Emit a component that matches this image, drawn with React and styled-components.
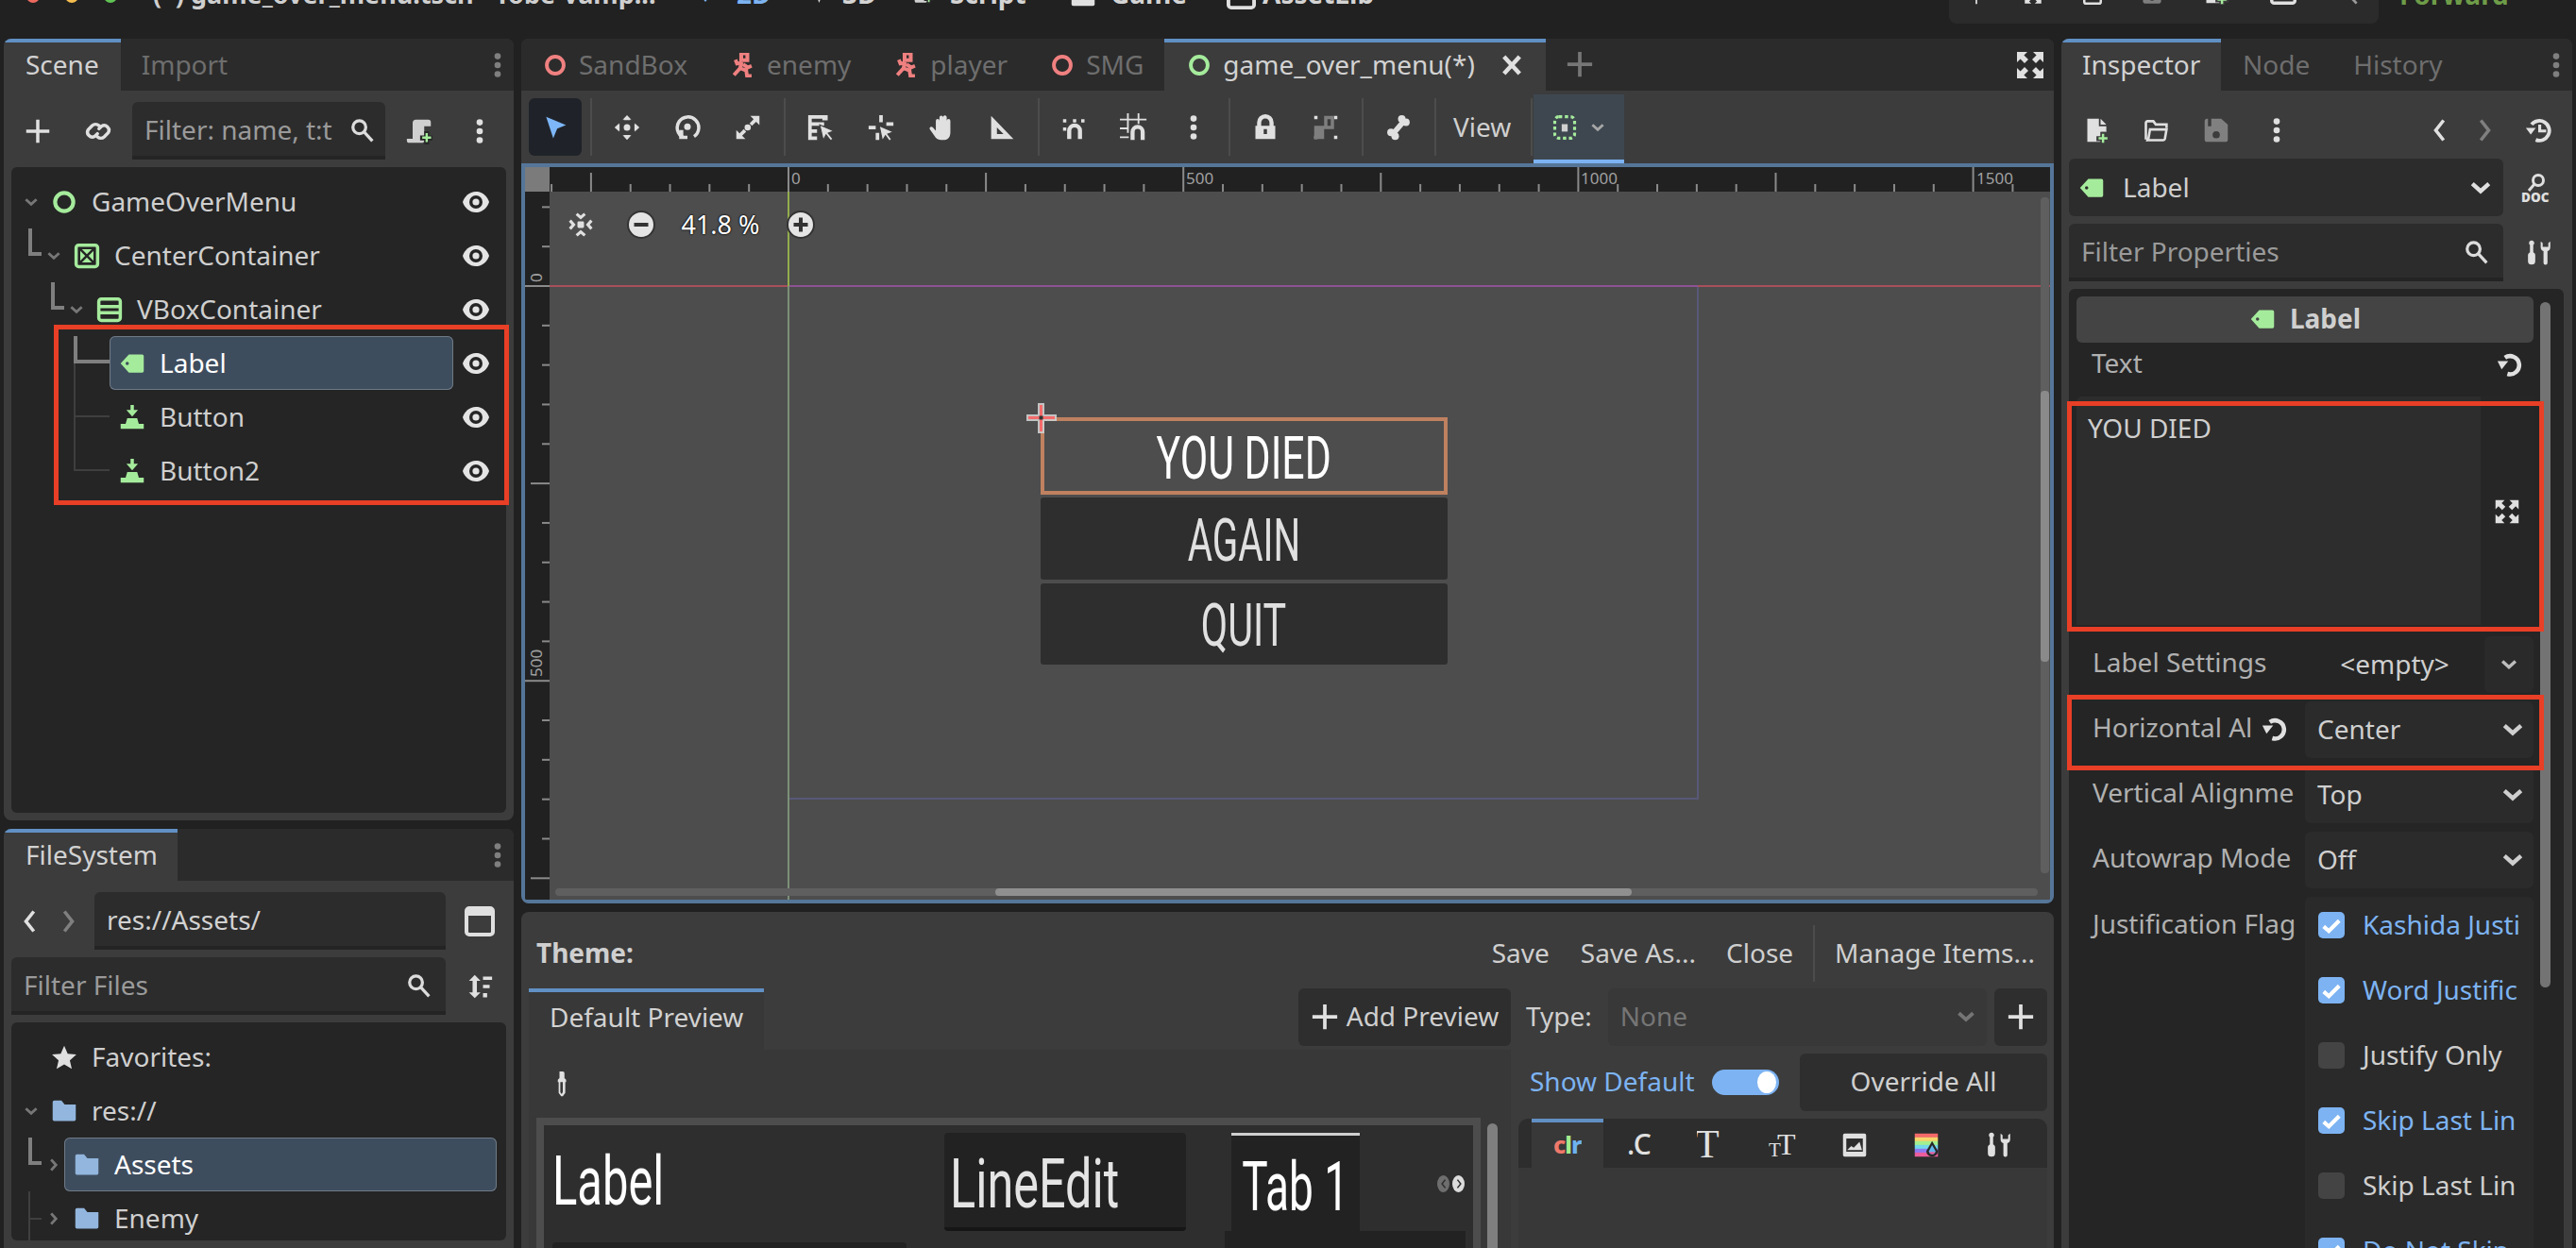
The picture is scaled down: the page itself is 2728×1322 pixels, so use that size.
import React from 'react';
import styled, { createGlobalStyle } from 'styled-components';

const Global = createGlobalStyle`
	html, body {
		margin: 0;
		padding: 0;
		background: #212121;
		overflow: hidden;
	}
	* {
		box-sizing: border-box;
	}
`;

const GREEN = '#a5eb9c';
const RED = '#f08080';
const BLUE = '#7db3f2';
const FOLDER = '#92b6dd';

// godot editor icons, 16 grid unless the icon says otherwise
const arrowCorner = 'M1 1h5.5L4.7 2.8 7 5 5 7 2.8 4.7 1 6.5z';
const icons = {
	plus: <path d="M7 1h2v6h6v2H9v6H7V9H1V7h6z" />,
	link: (
		<g fill="none" stroke="currentColor" strokeWidth="2" strokeLinecap="round">
			<path d="M7.5 9.5L6 11a2.9 2.9 0 0 1-4-4l2.4-2.4a2.9 2.9 0 0 1 4 0" />
			<path d="M8.5 6.5L10 5a2.9 2.9 0 0 1 4 4l-2.4 2.4a2.9 2.9 0 0 1-4 0" />
		</g>
	),
	search: (
		<g fill="none" stroke="currentColor" strokeWidth="2">
			<circle cx="6.5" cy="6" r="4.2" />
			<path d="M9.5 9l5.5 6" />
		</g>
	),
	kebab: (
		<g>
			<circle cx="8" cy="2.6" r="1.9" />
			<circle cx="8" cy="8" r="1.9" />
			<circle cx="8" cy="13.4" r="1.9" />
		</g>
	),
	scriptAdd: (
		<g>
			<path d="M4 12.5V3a2 2 0 0 1 2-2h7.5a1.5 1.5 0 0 1 1.5 1.5V5h-4v8.5A1.5 1.5 0 0 1 9.5 15H2a1.5 1.5 0 0 1-1.5-1.5v-1z" fill="#d0d0d0" />
			<path d="M11 8h3v2.500h2v3h-2V16h-3v-2.500H8.500v-3H11z" fill="#272727" />
			<path d="M11.800 9.200h1.400v2h2v1.400h-2v2h-1.400v-2h-2v-1.400h2z" fill={GREEN} />
		</g>
	),
	chevDown: <path d="M3 5.500l5 4.500 5-4.500" fill="none" stroke="currentColor" strokeWidth="2.500" />,
	chevRight: <path d="M5.500 3l4.500 5-4.500 5" fill="none" stroke="currentColor" strokeWidth="2.500" />,
	ring: <circle cx="8" cy="8" r="5.500" fill="none" stroke="currentColor" strokeWidth="2.400" />,
	centerBox: (
		<g fill="currentColor">
			<rect x="1.500" y="1.500" width="13" height="13" rx="1.500" fill="none" stroke="currentColor" strokeWidth="2" />
			<path d="M5 4h6L8 7zM5 12h6L8 9zM4 5v6l3-3zM12 5v6L9 8z" />
		</g>
	),
	vbox: (
		<g fill="none" stroke="currentColor" strokeWidth="2">
			<rect x="1.500" y="1.500" width="13" height="13" rx="1.500" />
			<path d="M2 6.200h12M2 9.800h12" />
		</g>
	),
	tag: <path fillRule="evenodd" d="M6 2.500h8a1 1 0 0 1 1 1v9a1 1 0 0 1-1 1H6L1 8zM5 7a1 1 0 1 0 0 2 1 1 0 0 0 0-2z" />,
	press: <path d="M7 .5h2v3h2.500L8 7.500 4.500 3.500H7zM5 8.500h6l1 3.500h3v3H1v-3h3z" />,
	folder: <path d="M1 2.500a1 1 0 0 1 1-1h4.300l2 2.500H15v9a1 1 0 0 1-1 1H2a1 1 0 0 1-1-1z" />,
	star: <path d="M8 1l2.100 4.800 5.300.5-4 3.500 1.200 5.200L8 12.300 3.400 15l1.200-5.200-4-3.500 5.300-.5z" />,
	back: <path d="M10.500 1L5 8l5.500 7" fill="none" stroke="currentColor" strokeWidth="2.400" />,
	forward: <path d="M5.500 1L11 8l-5.500 7" fill="none" stroke="currentColor" strokeWidth="2.400" />,
	diamond: <path d="M8 1l6 7-6 7-6-7z" />,
	solid: <rect x="1" y="1" width="14" height="14" rx="1" />,
	windowed: (
		<g>
			<rect x="1" y="1" width="14" height="14" rx="1.500" fill="none" stroke="currentColor" strokeWidth="2" />
			<rect x="1" y="1" width="14" height="4" />
		</g>
	),
	sort: (
		<g>
			<path d="M5 1l3.500 3.500H6.300v7H8.500L5 15l-3.500-3.500h2.200v-7H1.500z" />
			<path d="M10 2h5.500v2H10zM10 7h4v2h-4zM10 12h2.500v2.500H10z" />
		</g>
	),
	arrow: <path d="M2.500 1.500l12 5-5.300 2.200-2.400 5.800z" />,
	move: (
		<g>
			<circle cx="8" cy="8" r="2" />
			<path d="M8 .5l2.600 2.800H9.200L8 2.200 6.800 3.300H5.400zM8 15.500l2.600-2.800H9.200L8 13.800l-1.200-1.100H5.400zM.5 8l2.800-2.600v1.400L2.200 8l1.100 1.200v1.400zM15.500 8l-2.800-2.600v1.400L13.800 8l-1.100 1.200v1.400z" />
			<path d="M8 1l2 2.500H6zM8 15l2-2.500H6zM1 8l2.500-2v4zM15 8l-2.500-2v4z" />
		</g>
	),
	rotate: (
		<g>
			<path d="M5.500 14A6.500 6.500 0 1 1 12 13.500" fill="none" stroke="currentColor" strokeWidth="2" />
			<circle cx="8" cy="7.500" r="2" />
			<path d="M3 9.500v5.500h5v-2H5.500V9.500z" />
		</g>
	),
	scale: (
		<g>
			<path d="M9.500 1H15v5.500l-2-2-2.500 2.500L9 5.500 11.500 3zM1 9.500l2 2L5.500 9 7 10.500 4.500 13l2 2H1z" />
			<circle cx="7.900" cy="8" r="1.900" />
		</g>
	),
	listSelect: (
		<g>
			<path d="M1 1h11v3H9V3H3v2h7v2H3v2h3v2H3v2h3v2H1z" />
			<path d="M7.500 6.500l8 3.500-3.200 1.200 2.700 3.300-1.300 1-2.600-3.300-1.600 3z" stroke="#3d3d3d" strokeWidth=".6" />
		</g>
	),
	pivot: (
		<g>
			<path d="M7 1h2v4H7zM1 7h4v2H1zM11 5h4v2h-4zM5 11h2v4H5z" />
			<path d="M7 7l8 3.500-3.200 1.200 2.200 3-1.300 1-2.200-3-1.700 2.800z" stroke="#3d3d3d" strokeWidth=".6" />
		</g>
	),
	hand: <path d="M6.800 2a1.100 1.100 0 0 1 2.200 0v-.3a1.100 1.100 0 0 1 2.200.3v2a1.100 1.100 0 0 1 2.200 0V11c0 2.500-1.200 4.500-3.500 4.500H7.500c-1.800 0-2.800-.9-3.700-2.300L1 9.200c-.7-1.100.7-2.300 1.700-1.300L4.600 10V4a1.100 1.100 0 0 1 2.200 0z" />,
	ruler: <path fillRule="evenodd" d="M1.500 1L15 15H1.500zM5 8v4h4z" />,
	snap: (
		<g>
			<path d="M3.500 15V10a4.500 4.500 0 0 1 9 0v5H10v-5a2 2 0 0 0-4 0v5z" />
			<path d="M1 3h2v2H1zM1 8h2v2H1zM7 3h2v2H7zM12 3h2v2h-2z" />
		</g>
	),
	gridSnap: (
		<g>
			<path d="M4 0h1v11H4zM10 0h1v6h-1zM0 3h15v1H0zM0 8h5v1H0zM0 13h5v1H0z" />
			<path d="M6 15v-4.500a4 4 0 0 1 8 0V15h-2.300v-4.500a1.700 1.700 0 0 0-3.400 0V15z" />
		</g>
	),
	lock: <path fillRule="evenodd" d="M3 7V5a5 5 0 0 1 10 0v2h1v8H2V7zm2.500 0h5V5a2.500 2.500 0 0 0-5 0zM7 9v3h2V9z" />,
	group: (
		<g>
			<path d="M1 1h2v2H1zM13 1h2v2h-2zM1 13h2v2H1zM13 13h2v2h-2z" />
			<path d="M7 1h6v8H7v6H1V7h6zm2 2v4h2V3z" fill="#7e7e7e" />
		</g>
	),
	bone: (
		<g>
			<path d="M11 4.500L5 11.500" stroke="currentColor" strokeWidth="3.200" />
			<circle cx="10" cy="2.800" r="2.300" />
			<circle cx="12.500" cy="4.800" r="2.300" />
			<circle cx="3.500" cy="11" r="2.300" />
			<circle cx="6" cy="13.300" r="2.300" />
		</g>
	),
	dotted: (
		<g>
			<rect x="2" y="1.500" width="12" height="13" rx="2.500" fill="none" stroke={GREEN} strokeWidth="1.800" strokeDasharray="2 1.600" />
			<rect x="6.200" y="6" width="3.600" height="4.500" fill="#d0d0d0" />
		</g>
	),
	expand: (
		<g>
			<path d={arrowCorner} />
			<path d={arrowCorner} transform="matrix(-1 0 0 1 16 0)" />
			<path d={arrowCorner} transform="matrix(1 0 0 -1 0 16)" />
			<path d={arrowCorner} transform="matrix(-1 0 0 -1 16 16)" />
		</g>
	),
	center: (
		<g fill="none" stroke="currentColor" strokeWidth="1.800">
			<rect x="6" y="6" width="4" height="4" rx=".8" fill="currentColor" stroke="none" />
			<path d="M5.500 1.500L8 3.700l2.500-2.200M5.500 14.500L8 12.300l2.500 2.200M1.500 5.500L3.700 8l-2.200 2.500M14.500 5.500L12.300 8l2.200 2.500" />
		</g>
	),
	close: <path d="M2.500 2l11 12M13.500 2l-11 12" fill="none" stroke="currentColor" strokeWidth="3" />,
	runner: (
		<g>
			<path fillRule="evenodd" d="M5.500 0h6.500v6H5.500zM8 1.500v2h1.500v-2z" />
			<path d="M7 6L6 10 2 14.500M6 10l4 1.500 .5 3.500h3M8 7.500l3 2 2.500-1M7 6.500L4 7 3 4.500" fill="none" stroke="currentColor" strokeWidth="2.400" />
		</g>
	),
	fileAdd: (
		<g>
			<path d="M2 1h7v4.500h4.500V9H10v6H2zM10 1l3.500 3.500H10z" />
			<path d="M10 9h3v2.500h2.500v3H13V16h-3v-1.500H7.500v-3H10z" fill="#3d3d3d" />
			<path d="M10.800 10.200h1.400v2h2v1.400h-2v2h-1.400v-2h-2v-1.400h2z" fill={GREEN} />
		</g>
	),
	folderOpen: <path d="M2 13.500V3.500a1 1 0 0 1 1-1h3.500l1.500 2h6.500v2M2.200 14h10.300a1 1 0 0 0 1-.8l1-5.700H4.500l-1 5.700a1 1 0 0 1-1.300.8" fill="none" stroke="currentColor" strokeWidth="1.500" />,
	save: <path fillRule="evenodd" d="M1 2.500A1.500 1.500 0 0 1 2.500 1H3v4.500h2V1h6l4 3.500V13.500a1.500 1.500 0 0 1-1.500 1.500h-11A1.500 1.500 0 0 1 1 13.500zM8 8.500a2.200 2.200 0 1 0 0 4.400 2.200 2.200 0 0 0 0-4.400z" />,
	history: (
		<g>
			<path d="M4 4.500A6 6 0 1 1 6.500 13.800" fill="none" stroke="currentColor" strokeWidth="2.200" />
			<path d="M.5 6.500h6L3.500 10.500zM8 4.500h1.800v3h3v1.800H8z" />
		</g>
	),
	tools: (
		<g>
			<path d="M4 .5a1.500 1.500 0 0 1 1 2.700V7.500c1 .5 1.200 1 1.200 2v3.300a2.200 2.200 0 0 1-4.400 0V9.500c0-1 .3-1.500 1.200-2V3.200A1.500 1.500 0 0 1 4 .5z" />
			<path d="M9.500 1v3.500c0 1.300.8 2 1.700 2.300V14a1.200 1.200 0 0 0 2.400 0V6.800c.9-.3 1.700-1 1.700-2.300V1l-1.200 1V4.300h-3.400V2z" />
		</g>
	),
	reset: (
		<g>
			<path d="M5 4.500a5.500 5.500 0 1 1 1.500 9.800" fill="none" stroke="currentColor" strokeWidth="2.600" />
			<path d="M.5 6.500h6.500L3 11.500z" />
		</g>
	),
	dropper: <path fillRule="evenodd" d="M6 1h2a1 1 0 0 1 1 1v3l1 1v1.500H9.500v6.500L8 16h-1L5.500 14V7.500H5V6l1-1zM6.500 7.500v6L7 14.500h.5l.5-1v-6z" transform="translate(0 -.5)" />,
	picture: (
		<g>
			<path fillRule="evenodd" d="M2 1h12a1 1 0 0 1 1 1v12a1 1 0 0 1-1 1H2a1 1 0 0 1-1-1V2a1 1 0 0 1 1-1zm1 3v8h10V4z" />
			<path d="M3.500 11l2.500-2.500 1.500 1L11 6l1.500 5z" />
		</g>
	),
	rainbow: (
		<g>
			<rect x="1" y="1" width="14" height="2.400" fill="#f56a6a" />
			<rect x="1" y="3.300" width="14" height="2.400" fill="#f7d56a" />
			<rect x="1" y="5.600" width="14" height="2.400" fill="#a4f08f" />
			<rect x="1" y="7.900" width="14" height="2.400" fill="#72d8ea" />
			<rect x="1" y="10.200" width="14" height="2.400" fill="#8e78f0" />
			<rect x="1" y="12.500" width="14" height="2.500" fill="#ec5d9c" />
			<path d="M11.500 5.500L8 11.500a3.400 3.400 0 1 0 7 0z" fill="#272727" />
			<path d="M11.500 8L9.600 11.500a1.950 1.950 0 1 0 3.900 0z" fill="#61b7ee" />
			<path d="M9.700 12.200a1.950 1.950 0 0 0 3.700 0z" fill="#ec5d9c" />
		</g>
	),
};

const Svg = styled.svg`
	width: ${(p) => p.$w}px;
	height: ${(p) => p.$h}px;
	color: ${(p) => p.$c};
	fill: currentColor;
	flex: none;
	display: block;
`;

function Icon({ name, size = 28, height, color = '#e0e0e0' }) {
	return (
		<Svg viewBox="0 0 16 16" preserveAspectRatio="none" $w={size} $h={height || size} $c={color}>
			{icons[name]}
		</Svg>
	);
}

function Eye() {
	return (
		<Svg viewBox="0 0 28 24" $w={28} $h={24} $c="#e4e4e4">
			<path d="M14 1c7 0 12 5 14 11-2 6-7 11-14 11S2 18 0 12C2 6 7 1 14 1z" />
			<circle cx="14" cy="12" r="7" fill="#252525" />
			<circle cx="14" cy="12" r="3.600" />
		</Svg>
	);
}

function Badge({ sign }) {
	return (
		<Svg viewBox="0 0 30 30" $w={30} $h={32} $c="#e4e4e4">
			<circle cx="15" cy="15" r="14" stroke="#333" strokeWidth="2" />
			<path d={sign === '+' ? 'M13 7.500h4V13h5.500v4H17v5.500h-4V17H7.500v-4H13z' : 'M7.500 13h15v4h-15z'} fill="#333" />
		</Svg>
	);
}

function DocIcon() {
	return (
		<Svg viewBox="0 0 30 32" $w={30} $h={32} $c="#e0e0e0">
			<circle cx="18" cy="8" r="5.500" fill="none" stroke="currentColor" strokeWidth="3" />
			<path d="M14 12l-6 7" stroke="currentColor" strokeWidth="3" />
			<text x="0" y="31" fontFamily="Noto Sans, sans-serif" fontWeight="900" fontSize="13.500">DOC</text>
		</Svg>
	);
}

// the theme tabs that are letters, not shapes
function LetterIcon({ kind }) {
	if (kind === 'clr') {
		return (
			<Svg viewBox="0 0 30 28" $w={30} $h={28} $c="#e0e0e0">
				<text x="0" y="23" fontFamily="Noto Sans, sans-serif" fontWeight="800" fontSize="25" letterSpacing="-1">
					<tspan fill="#f0786a">c</tspan>
					<tspan fill="#a4ed8e">l</tspan>
					<tspan fill="#6eb2ef">r</tspan>
				</text>
			</Svg>
		);
	}
	if (kind === 'dotC') {
		return (
			<Svg viewBox="0 0 30 28" $w={30} $h={28} $c="#e0e0e0">
				<text x="2" y="24" fontFamily="Noto Sans, sans-serif" fontWeight="500" fontSize="30">.C</text>
			</Svg>
		);
	}
	if (kind === 'bigT') {
		return (
			<Svg viewBox="0 0 30 30" $w={30} $h={30} $c="#e0e0e0">
				<text x="-2" y="28" fontFamily="Liberation Serif, serif" fontSize="42">T</text>
			</Svg>
		);
	}
	return (
		<Svg viewBox="0 0 30 28" $w={30} $h={28} $c="#e0e0e0">
			<text x="0" y="26" fontFamily="Liberation Serif, serif" fontSize="21">T</text>
			<text x="9" y="24" fontFamily="Liberation Serif, serif" fontSize="32">T</text>
		</Svg>
	);
}

const Page = styled.div`
	width: 2728px;
	height: 1322px;
	overflow: hidden;
	background: #212121;
	color: #cfcfcf;
	font-family: 'Noto Sans', sans-serif;
	font-size: 28px;
	line-height: 1.2;
	position: relative;
	display: flex;
	flex-direction: column;
`;

const TopBar = styled.div`
	height: 41px;
	flex: none;
	display: flex;
	overflow: hidden;
	align-items: flex-start;
	padding-left: 28px;
`;

const Lights = styled.div`
	display: flex;
	gap: 27px;
	margin-top: -11px;
	margin-right: 38px;
`;

const Light = styled.div`
	width: 14px;
	height: 14px;
	border-radius: 50%;
	background: ${(p) => p.$c};
`;

const MenuRow = styled.div`
	display: flex;
	align-items: center;
	height: 40px;
	margin-top: -26px;
	font-weight: 700;
	color: #d4d4d4;
	white-space: nowrap;
`;

const WindowTitle = styled.div`
	width: 576px;
	font-size: 27px;
	overflow: hidden;
	font-weight: 700;
	color: #cfcfcf;
`;

const MenuItem = styled.div`
	width: ${(p) => p.$w}px;
	flex: none;
	display: flex;
	align-items: center;
	gap: ${(p) => p.$gap}px;
	color: ${(p) => p.$c || 'inherit'};
`;

const RunBox = styled.div`
	margin-left: auto;
	width: 455px;
	height: 25px;
	background: #2b2b2b;
	border-radius: 0 0 8px 8px;
	padding: 0 22px 20px;
	overflow: hidden;
	display: flex;
	justify-content: space-between;
	align-items: flex-end;
`;

const Renderer = styled.div`
	color: #6e9c48;
	font-weight: 700;
	width: 209px;
	padding-left: 22px;
	margin-top: -22px;
`;

const Columns = styled.div`
	flex: 1;
	min-height: 0;
	display: flex;
	gap: 8px;
	padding-left: 4px;
`;

const Column = styled.div`
	width: ${(p) => p.$w}px;
	flex: none;
	display: flex;
	flex-direction: column;
	gap: 9px;
`;

const Panel = styled.div`
	background: #3c3c3c;
	border-radius: 8px 8px 0 0;
	overflow: hidden;
	flex: ${(p) => (p.$h ? 'none' : '1')};
	height: ${(p) => (p.$h ? `${p.$h}px` : 'auto')};
	display: flex;
	flex-direction: column;
	min-height: 0;
	${(p) => p.$h && 'border-radius: 8px;'}
`;

const TabBar = styled.div`
	height: 55px;
	flex: none;
	background: #2b2b2b;
	display: flex;
	align-items: stretch;
`;

const Tab = styled.div`
	display: flex;
	align-items: center;
	gap: ${(p) => p.$gap || 12}px;
	padding: 0 ${(p) => p.$pad || 23}px 4px;
	color: ${(p) => (p.$active ? '#d2d2d2' : '#6e6e6e')};
	background: ${(p) => (p.$active ? '#3c3c3c' : 'transparent')};
	border-top: 4px solid ${(p) => (p.$active ? '#6190c4' : 'transparent')};
	width: ${(p) => (p.$w ? `${p.$w}px` : 'auto')};
	white-space: nowrap;
`;

const TabEnd = styled.div`
	margin-left: auto;
	display: flex;
	align-items: center;
	padding-right: ${(p) => p.$pad || 0}px;
`;

const NewTab = styled.div`
	display: flex;
	align-items: center;
	padding: 0 0 2px 21px;
`;

const SideBar = styled.div`
	display: flex;
	align-items: center;
	flex: none;
	height: ${(p) => p.$h || 61}px;
	margin-top: ${(p) => p.$top || 0}px;
	padding: 0 0 0 ${(p) => p.$left || 0}px;
`;

const Gap = styled.div`
	width: ${(p) => p.$w}px;
	flex: none;
`;

const LineEdit = styled.div`
	width: ${(p) => p.$w}px;
	height: 61px;
	flex: none;
	background: #2c2c2c;
	border-bottom: 4px solid #242424;
	border-radius: 6px 6px 0 0;
	display: flex;
	align-items: center;
	justify-content: space-between;
	padding: 3px ${(p) => p.$right || 16}px 0 13px;
	color: ${(p) => p.$c || '#9a9a9a'};
`;

const TreeBox = styled.div`
	margin: 8px 8px 8px;
	background: #252525;
	border-radius: 6px;
	flex: 1;
	min-height: 0;
	padding-top: 8px;
	overflow: hidden;
	position: relative;
`;

const TreeRow = styled.div`
	height: 57px;
	display: flex;
	align-items: center;
	padding: 0 ${(p) => p.$right || 18}px 0 12px;
`;

const Indent = styled.div`
	width: ${(p) => p.$depth * 24}px;
	flex: none;
	align-self: stretch;
	display: flex;
	justify-content: flex-end;
`;

const Elbow = styled.div`
	width: 14px;
	height: 29px;
	margin-right: 4px;
	border-left: 4px solid #7f7f7f;
	border-bottom: 4px solid #7f7f7f;
`;

const ThinTee = styled.div`
	width: 14px;
	height: 100%;
	margin-right: 4px;
	border-left: 2px solid #3f3f3f;
	background: linear-gradient(#3f3f3f, #3f3f3f) no-repeat 0 50% / 100% 2px;
`;

const ChevSlot = styled.div`
	width: 30px;
	flex: none;
	display: flex;
`;

const LeafGuide = styled.div`
	width: 92px;
	flex: none;
	align-self: stretch;
	padding-left: 54px;
	display: flex;
	flex-direction: column;
`;

const BranchTop = styled.div`
	height: 29px;
	flex: none;
	border-left: ${(p) => (p.$strong ? '4px solid #7f7f7f' : '2px solid #3f3f3f')};
	border-bottom: ${(p) => (p.$strong ? '4px solid #7f7f7f' : '2px solid #3f3f3f')};
`;

const BranchRest = styled.div`
	flex: 1;
	border-left: 2px solid ${(p) => (p.$none ? 'transparent' : '#3f3f3f')};
`;

const NameBox = styled.div`
	flex: 1;
	min-width: 0;
	height: 100%;
	display: flex;
	align-items: center;
	gap: ${(p) => p.$gap || 15}px;
	border-radius: 6px;
	padding-left: ${(p) => p.$pad || 0}px;
	margin-left: ${(p) => (p.$pull ? '-10px' : '0')};
	margin-right: ${(p) => p.$after || 10}px;
	color: ${(p) => (p.$on ? '#ffffff' : '#cfcfcf')};
	background: ${(p) => (p.$on ? '#3e4d5e' : 'transparent')};
	box-shadow: ${(p) => (p.$on ? 'inset 0 0 0 1px #6f7a86' : 'none')};
`;

const Mark = styled.div`
	position: absolute;
	left: ${(p) => p.$x}px;
	top: ${(p) => p.$y}px;
	width: ${(p) => p.$w}px;
	height: ${(p) => p.$h}px;
	border: 5px solid #e83f26;
	pointer-events: none;
`;

const ToolBar = styled.div`
	height: 77px;
	flex: none;
	display: flex;
	align-items: flex-start;
	padding: 8px 0 0 8px;
`;

const ToolBtn = styled.div`
	width: ${(p) => p.$w || 64}px;
	height: 61px;
	flex: none;
	display: flex;
	align-items: center;
	justify-content: center;
	border-radius: 6px;
	background: ${(p) => (p.$on ? '#1f2329' : 'transparent')};
	margin-right: ${(p) => p.$mr || 0}px;
`;

const ToolSep = styled.div`
	width: 2px;
	height: 61px;
	flex: none;
	margin: 0 5px 0 6px;
	background: #4c4c4c;
`;

const ViewBtn = styled.div`
	height: 61px;
	display: flex;
	align-items: center;
	padding: 0 15px 0 13px;
`;

const ModeBtn = styled.div`
	width: 96px;
	height: 73px;
	margin: -4px 0 0 -4px;
	background: #3e4750;
	border-bottom: 4px solid ${BLUE};
	display: flex;
	align-items: center;
	justify-content: center;
	gap: 12px;
`;

const Frame = styled.div`
	height: 784px;
	flex: none;
	border: 4px solid #557699;
	border-radius: 0 0 6px 6px;
	display: grid;
	grid-template-columns: 26px 1fr;
	grid-template-rows: 26px 1fr;
	overflow: hidden;
`;

const RulerCorner = styled.div`
	background: #7b7b7b;
`;

const RulerSvg = styled.svg`
	display: block;
	background: #212121;
	width: 100%;
	height: 100%;
	font-family: 'Noto Sans', sans-serif;
	font-size: 17px;
	fill: #a0a0a0;
`;

const Canvas = styled.div`
	position: relative;
	background: #4d4d4d;
	overflow: hidden;
`;

const GuideSvg = styled.svg`
	position: absolute;
	left: 0;
	top: 0;
	width: 100%;
	height: 100%;
`;

const ZoomBar = styled.div`
	position: absolute;
	left: 19px;
	top: 19px;
	display: flex;
	align-items: center;
	color: #fff;
	text-shadow: 0 0 2px #000, 0 0 2px #000;
	font-size: 27px;
`;

const ZoomValue = styled.div`
	width: 139px;
	text-align: center;
	padding-right: 1px;
`;

const ScenePreview = styled.div`
	position: absolute;
	left: 520px;
	top: 239px;
	width: 431px;
	display: flex;
	flex-direction: column;
	gap: 3px;
	font-family: Roboto, sans-serif;
	font-weight: 450;
	font-size: 63px;
`;

const Condensed = styled.span`
	display: inline-block;
	transform: scaleX(${(p) => p.$k || 0.67});
	transform-origin: ${(p) => p.$origin || 'center'};
	white-space: nowrap;
	line-height: 1;
`;

const GameLabel = styled.div`
	height: 82px;
	border: 4px solid #bf8160;
	color: #fff;
	display: flex;
	align-items: center;
	justify-content: center;
	padding-top: 4px;
`;

const GameButton = styled.div`
	height: ${(p) => p.$h}px;
	margin-top: ${(p) => p.$mt || 0}px;
	background: #2e2e2e;
	border-radius: 3px;
	color: #e0e0e0;
	display: flex;
	align-items: center;
	justify-content: center;
	padding-top: 3px;
`;

const Handle = styled.svg`
	position: absolute;
	left: 504px;
	top: 223px;
	width: 34px;
	height: 34px;
`;

const VScroll = styled.div`
	position: absolute;
	left: 1579px;
	top: 6px;
	width: 9px;
	height: 716px;
	background: #5f5f5f;
	border-radius: 4px;
`;

const VThumb = styled.div`
	margin-top: 205px;
	height: 287px;
	background: #8a8a8a;
	border-radius: 4px;
`;

const HScroll = styled.div`
	position: absolute;
	left: 6px;
	top: 738px;
	width: 1570px;
	height: 8px;
	background: #5f5f5f;
	border-radius: 4px;
	padding-left: 466px;
`;

const HThumb = styled.div`
	width: 674px;
	height: 8px;
	background: #8f8f8f;
	border-radius: 4px;
`;

const Bottom = styled(Panel)`
	border-radius: 8px 8px 0 0;
	padding: 0 7px 0 8px;
`;

const ThemeHead = styled.div`
	height: 81px;
	flex: none;
	display: flex;
	align-items: center;
	padding: 6px 12px 0 8px;
`;

const ThemeTitle = styled.div`
	font-weight: 700;
	margin-right: auto;
`;

const ThemeAct = styled.div`
	margin-right: ${(p) => p.$mr}px;
`;

const HeadSep = styled.div`
	width: 2px;
	height: 60px;
	background: #4c4c4c;
	margin-right: 21px;
`;

const ThemeBody = styled.div`
	flex: 1;
	min-height: 0;
	display: flex;
	gap: 8px;
`;

const PreviewCol = styled.div`
	width: 1040px;
	flex: none;
	display: flex;
	flex-direction: column;
`;

const PreviewTabs = styled.div`
	height: 65px;
	flex: none;
	display: flex;
	align-items: flex-start;
	justify-content: space-between;
`;

const PreviewTab = styled.div`
	width: 249px;
	height: 65px;
	background: #383838;
	border-top: 4px solid #6190c4;
	display: flex;
	align-items: center;
	padding: 0 0 8px 22px;
	color: #d2d2d2;
`;

const DarkBtn = styled.div`
	width: ${(p) => p.$w}px;
	height: 61px;
	flex: none;
	background: #2e2e2e;
	border-radius: 6px;
	display: flex;
	align-items: center;
	justify-content: center;
	gap: ${(p) => p.$gap || 8}px;
	padding-bottom: 2px;
`;

const PreviewBody = styled.div`
	flex: 1;
	min-height: 0;
	background: #383838;
	padding-left: 8px;
`;

const DropperRow = styled.div`
	height: 72px;
	display: flex;
	align-items: center;
	padding-left: 14px;
`;

const PreviewWrap = styled.div`
	display: flex;
	height: 200px;
`;

const PreviewFrame = styled.div`
	width: 1000px;
	background: #4d4d4d;
	padding: 8px 8px 0;
`;

const PreviewInner = styled.div`
	height: 100%;
	background: #2e2e2e;
	padding: 8px 8px 0 9px;
	display: flex;
	color: #fff;
	font-family: Roboto, sans-serif;
	font-weight: 450;
	font-size: 73px;
`;

const PreviewScroll = styled.div`
	width: 11px;
	margin: 6px 0 0 7px;
	background: #7f7f7f;
	border-radius: 6px;
`;

const LabelCol = styled.div`
	width: 375px;
	flex: none;
`;

const PreviewLabel = styled.div`
	height: 116px;
	display: flex;
	align-items: center;
	padding-bottom: 14px;
`;

const PreviewDark = styled.div`
	height: 100px;
	background: #222;
	border-radius: 4px 4px 0 0;
`;

const EditBox = styled.div`
	width: 256px;
	height: 104px;
	margin-left: 40px;
	flex: none;
	background: #222;
	border-bottom: 4px solid #161616;
	border-radius: 4px;
	color: #e4e4e4;
	display: flex;
	align-items: center;
	padding-left: 6px;
	padding-top: 8px;
`;

const TabsCol = styled.div`
	width: 255px;
	flex: none;
	margin-left: 41px;
	display: flex;
	flex-direction: column;
`;

const PreviewTabRow = styled.div`
	height: 104px;
	flex: none;
	display: flex;
	align-items: center;
	justify-content: space-between;
	padding-left: 7px;
`;

const PreviewTabBox = styled.div`
	width: 136px;
	height: 104px;
	background: #222;
	border-top: 3px solid #cfcfcf;
	display: flex;
	align-items: center;
	justify-content: center;
	padding-top: 8px;
`;

const TinyArrows = styled.div`
	display: flex;
	gap: 3px;
	width: 30px;
	padding-top: 4px;
`;

const TinyArrow = styled.div`
	width: 13px;
	height: 18px;
	border-radius: 50%;
	background: ${(p) => p.$c};
	display: flex;
	align-items: center;
	justify-content: center;
`;

const ItemsCol = styled.div`
	width: 560px;
	flex: none;
	display: flex;
	flex-direction: column;
`;

const ItemsRow = styled.div`
	height: 61px;
	flex: none;
	display: flex;
	align-items: center;
	margin-top: ${(p) => p.$mt || 0}px;
	white-space: nowrap;
`;

const TypeLabel = styled.span`
	margin-bottom: 2px;
`;

const ShowDefault = styled.span`
	color: ${BLUE};
	margin-bottom: 2px;
`;

const DimSelect = styled.div`
	width: 402px;
	height: 61px;
	background: #383838;
	border-radius: 6px;
	color: #757575;
	display: flex;
	align-items: center;
	justify-content: space-between;
	padding: 0 10px 2px 13px;
	margin-right: 8px;
`;

const Toggle = styled.div`
	width: 72px;
	height: 27px;
	margin: 0 22px 0 18px;
	border-radius: 14px;
	background: ${BLUE};
	display: flex;
	align-items: center;
	justify-content: flex-end;
	padding-right: 2px;
`;

const Knob = styled.div`
	width: 20px;
	height: 23px;
	margin-right: 1px;
	background: #fff;
	border-radius: 50%;
`;

const IconStrip = styled.div`
	margin-top: 8px;
	height: 52px;
	flex: none;
	background: #2d2d2d;
	border-radius: 10px 10px 0 0;
	padding-left: 14px;
	display: flex;
`;

const StripTab = styled.div`
	width: 76px;
	display: flex;
	align-items: center;
	justify-content: center;
	background: ${(p) => (p.$on ? '#383838' : 'transparent')};
	border-top: 4px solid ${(p) => (p.$on ? '#6190c4' : 'transparent')};
`;

const StripBody = styled.div`
	flex: 1;
	background: ${(p) => p.$c || '#383838'};
`;

const InspectorBox = styled.div`
	margin: 8px 9px 0 8px;
	background: #252525;
	border-radius: 6px 6px 0 0;
	flex: 1;
	min-height: 0;
	padding: 8px 32px 0 8px;
	position: relative;
	overflow: hidden;
	display: flex;
	flex-direction: column;
`;

const SectionHead = styled.div`
	height: 49px;
	flex: none;
	background: #444;
	border-radius: 6px;
	display: flex;
	align-items: center;
	justify-content: center;
	gap: 15px;
	font-weight: 700;
	padding-bottom: 2px;
`;

const TextHead = styled.div`
	height: 44px;
	flex: none;
	display: flex;
	align-items: center;
	justify-content: space-between;
	padding: 0 11px 0 16px;
	color: #b0b0b0;
`;

const TextEditor = styled.div`
	height: 242px;
	margin-top: 13px;
	flex: none;
	display: flex;
`;

const TextArea = styled.div`
	flex: 1;
	background: #2d2d2d;
	padding: 17px 12px;
	border-radius: 6px 0 0 0;
`;

const TextSide = styled.div`
	width: 56px;
	flex: none;
	background: #262626;
	display: flex;
	align-items: center;
	justify-content: center;
	padding-top: 2px;
`;

const PropList = styled.div`
	margin-top: 12px;
	display: flex;
	flex-direction: column;
	gap: 9px;
	flex: 1;
	min-height: 0;
`;

const PropRow = styled.div`
	height: ${(p) => (p.$fill ? '400px' : '60px')};
	flex: none;
	display: flex;
	align-items: ${(p) => (p.$fill ? 'flex-start' : 'center')};
`;

const PropName = styled.div`
	width: 242px;
	flex: none;
	padding-left: 17px;
	color: #b0b0b0;
	display: flex;
	align-items: center;
	gap: 10px;
	white-space: nowrap;
	overflow: hidden;
	padding-top: ${(p) => (p.$fill ? '12px' : '0')};
	margin-top: ${(p) => (p.$fill ? '0' : '-4px')};
`;

const SelectBox = styled.div`
	flex: 1;
	height: 60px;
	background: #2b2b2b;
	border-radius: 6px;
	display: flex;
	align-items: center;
	justify-content: space-between;
	padding: 0 8px 0 13px;
`;

const NodePicker = styled.div`
	width: 460px;
	height: 61px;
	flex: none;
	background: #2c2c2c;
	border-radius: 6px;
	display: flex;
	align-items: center;
	padding: 0 10px 0 10px;
`;

const EmptyValue = styled.div`
	flex: 1;
	text-align: center;
`;

const MiniSelect = styled.div`
	width: 52px;
	height: 60px;
	background: #2a2a2a;
	border-radius: 6px;
	display: flex;
	align-items: center;
	justify-content: center;
`;

const FlagList = styled.div`
	flex: 1;
	background: #2a2a2a;
	border-radius: 6px 6px 0 0;
	display: flex;
	flex-direction: column;
	gap: 9px;
`;

const Flag = styled.div`
	height: 60px;
	flex: none;
	display: flex;
	align-items: center;
	padding-left: 14px;
	gap: 19px;
	color: ${(p) => (p.$on ? BLUE : '#cfcfcf')};
	white-space: nowrap;
`;

const CheckBox = styled.div`
	width: 28px;
	height: 28px;
	flex: none;
	border-radius: 5px;
	background: ${(p) => (p.$on ? BLUE : '#444')};
	display: flex;
	align-items: center;
	justify-content: center;
`;

const InspectorThumb = styled.div`
	position: absolute;
	left: 499px;
	top: 14px;
	width: 11px;
	height: 726px;
	background: #737373;
	border-radius: 6px;
`;

const CheckMark = () => (
	<Svg viewBox="0 0 16 16" $w={22} $h={22} $c="#fff">
		<path d="M2 9l4 3.500L14 4.500" fill="none" stroke="currentColor" strokeWidth="3" />
	</Svg>
);

function TopRuler() {
	const ticks = [];
	for (let i = -6; i < 32; i++) {
		const x = 253 + 41.82 * i;
		const top = i % 10 === 0 ? 0 : i % 5 === 0 ? 6 : 18;
		ticks.push(<rect key={i} x={x - 1} y={top} width="2" height={26 - top} fill="#8a8a8a" />);
	}
	return (
		<RulerSvg viewBox="0 0 1589 26" preserveAspectRatio="none">
			{ticks}
			<text x="256" y="18">0</text>
			<text x="674" y="18">500</text>
			<text x="1092" y="18">1000</text>
			<text x="1511" y="18">1500</text>
		</RulerSvg>
	);
}

function LeftRuler() {
	const ticks = [];
	for (let i = -2; i < 17; i++) {
		const y = 100 + 41.82 * i;
		const left = i % 10 === 0 ? 0 : i % 5 === 0 ? 6 : 18;
		ticks.push(<rect key={i} x={left} y={y - 1} width={26 - left} height="2" fill="#8a8a8a" />);
	}
	return (
		<RulerSvg viewBox="0 0 26 750" preserveAspectRatio="none">
			{ticks}
			<text transform="translate(18 96) rotate(-90)">0</text>
			<text transform="translate(18 514) rotate(-90)">500</text>
		</RulerSvg>
	);
}

function SceneRow({ depth, icon, text }) {
	return (
		<TreeRow>
			<Indent $depth={depth}>{depth > 0 && <Elbow />}</Indent>
			<ChevSlot>
				<Icon name="chevDown" size={18} color="#777" />
			</ChevSlot>
			<NameBox>
				<Icon name={icon} color={GREEN} />
				{text}
			</NameBox>
			<Eye />
		</TreeRow>
	);
}

function LeafRow({ first, last, on, icon, text }) {
	return (
		<TreeRow>
			<LeafGuide>
				<BranchTop $strong={first} />
				<BranchRest $none={last} />
			</LeafGuide>
			<NameBox $on={on} $pad={10}>
				<Icon name={icon} color={GREEN} />
				{text}
			</NameBox>
			<Eye />
		</TreeRow>
	);
}

const openTabs = [
	{ icon: 'ring', text: 'SandBox' },
	{ icon: 'runner', text: 'enemy' },
	{ icon: 'runner', text: 'player' },
	{ icon: 'ring', text: 'SMG' },
];

export default function App() {
	return (
		<Page>
			<Global />
			<TopBar>
				<Lights>
					<Light $c="#ee6a5f" />
					<Light $c="#f5bd4f" />
					<Light $c="#61c454" />
				</Lights>
				<MenuRow>
					<WindowTitle>(*) game_over_menu.tscn - Tobe-vamp...</WindowTitle>
					<MenuItem $c={BLUE} $w={120} $gap={24}>
						<Icon name="diamond" size={18} color={BLUE} />
						2D
					</MenuItem>
					<MenuItem $w={110} $gap={12}>
						<Icon name="arrow" size={22} />
						3D
					</MenuItem>
					<MenuItem $w={165} $gap={18}>
						<Icon name="scriptAdd" size={20} />
						Script
					</MenuItem>
					<MenuItem $w={166} $gap={15}>
						<Icon name="solid" />
						Game
					</MenuItem>
					<MenuItem $w={180} $gap={7}>
						<Icon name="windowed" size={31} />
						AssetLib
					</MenuItem>
				</MenuRow>
				<RunBox>
					<Icon name="plus" size={14} />
					<Icon name="expand" size={20} />
					<Icon name="windowed" size={20} />
					<Icon name="save" color="#7e7e7e" size={22} />
					<Icon name="fileAdd" />
					<Icon name="windowed" />
					<Icon name="search" color="#9a9a9a" size={22} />
				</RunBox>
				<Renderer>Forward</Renderer>
			</TopBar>

			<Columns>
				<Column $w={540}>
					<Panel $h={828}>
						<TabBar>
							<Tab $active>Scene</Tab>
							<Tab $pad={22}>Import</Tab>
							<TabEnd $pad={3}>
								<Icon name="kebab" color="#7f7f7f" />
							</TabEnd>
						</TabBar>
						<SideBar $top={12} $left={22}>
							<Icon name="plus" />
							<Gap $w={36} />
							<Icon name="link" />
							<Gap $w={22} />
							<LineEdit $w={268} $right={12}>
								Filter: name, t:t
								<Icon name="search" size={26} color="#dcdcdc" />
							</LineEdit>
							<Gap $w={22} />
							<Icon name="scriptAdd" />
							<Gap $w={36} />
							<Icon name="kebab" />
						</SideBar>
						<TreeBox>
							<SceneRow depth={0} icon="ring" text="GameOverMenu" />
							<SceneRow depth={1} icon="centerBox" text="CenterContainer" />
							<SceneRow depth={2} icon="vbox" text="VBoxContainer" />
							<LeafRow first on icon="tag" text="Label" />
							<LeafRow icon="press" text="Button" />
							<LeafRow last icon="press" text="Button2" />
						</TreeBox>
					</Panel>
					<Panel>
						<TabBar>
							<Tab $active $w={184}>FileSystem</Tab>
							<TabEnd $pad={3}>
								<Icon name="kebab" color="#7f7f7f" />
							</TabEnd>
						</TabBar>
						<SideBar $top={12} $left={16}>
							<Icon name="back" size={24} />
							<Gap $w={16} />
							<Icon name="forward" size={24} color="#7f7f7f" />
							<Gap $w={16} />
							<LineEdit $w={372} $c="#d2d2d2">res://Assets/</LineEdit>
							<Gap $w={20} />
							<Icon name="windowed" size={32} />
						</SideBar>
						<SideBar $top={8} $left={8}>
							<LineEdit $w={460}>
								Filter Files
								<Icon name="search" size={26} color="#dcdcdc" />
							</LineEdit>
							<Gap $w={22} />
							<Icon name="sort" />
						</SideBar>
						<TreeBox>
							<TreeRow $right={9}>
								<Indent $depth={0} />
								<ChevSlot />
								<NameBox>
									<Icon name="star" />
									Favorites:
								</NameBox>
							</TreeRow>
							<TreeRow $right={9}>
								<Indent $depth={0} />
								<ChevSlot>
									<Icon name="chevDown" size={18} color="#777" />
								</ChevSlot>
								<NameBox>
									<Icon name="folder" color={FOLDER} />
									res://
								</NameBox>
							</TreeRow>
							<TreeRow $right={9}>
								<Indent $depth={1}><Elbow /></Indent>
								<ChevSlot>
									<Icon name="chevRight" size={18} color="#777" />
								</ChevSlot>
								<NameBox $on $pull $pad={10} $after={1}>
									<Icon name="folder" color={FOLDER} />
									Assets
								</NameBox>
							</TreeRow>
							<TreeRow $right={9}>
								<Indent $depth={1}><ThinTee /></Indent>
								<ChevSlot>
									<Icon name="chevRight" size={18} color="#777" />
								</ChevSlot>
								<NameBox>
									<Icon name="folder" color={FOLDER} />
									Enemy
								</NameBox>
							</TreeRow>
						</TreeBox>
					</Panel>
				</Column>

				<Column $w={1623}>
					<Panel $h={916}>
						<TabBar>
							{openTabs.map((t, i) => (
								<Tab key={t.text} $pad={i === 3 ? 22 : 23}>
									<Icon name={t.icon} size={26} color={RED} />
									{t.text}
								</Tab>
							))}
							<Tab $active $pad={24}>
								<Icon name="ring" size={26} color={GREEN} />
								game_over_menu(*)
								<Gap $w={3} />
								<Icon name="close" size={24} />
							</Tab>
							<NewTab>
								<Icon name="plus" size={30} color="#767676" />
							</NewTab>
							<TabEnd $pad={9}>
								<Icon name="expand" size={32} />
							</TabEnd>
						</TabBar>
						<ToolBar>
							<ToolBtn $w={56} $on $mr={3}>
								<Icon name="arrow" color="#7db6f9" />
							</ToolBtn>
							<ToolSep />
							<ToolBtn><Icon name="move" /></ToolBtn>
							<ToolBtn><Icon name="rotate" /></ToolBtn>
							<ToolBtn><Icon name="scale" /></ToolBtn>
							<ToolSep />
							<ToolBtn><Icon name="listSelect" size={30} /></ToolBtn>
							<ToolBtn><Icon name="pivot" size={30} /></ToolBtn>
							<ToolBtn><Icon name="hand" /></ToolBtn>
							<ToolBtn><Icon name="ruler" /></ToolBtn>
							<ToolSep />
							<ToolBtn $w={63}><Icon name="snap" /></ToolBtn>
							<ToolBtn $w={63}><Icon name="gridSnap" size={30} /></ToolBtn>
							<ToolBtn $w={63}><Icon name="kebab" /></ToolBtn>
							<ToolSep />
							<ToolBtn><Icon name="lock" /></ToolBtn>
							<ToolBtn><Icon name="group" /></ToolBtn>
							<ToolSep />
							<ToolBtn><Icon name="bone" /></ToolBtn>
							<ToolSep />
							<ViewBtn>View</ViewBtn>
							<ToolSep />
							<ModeBtn>
								<Icon name="dotted" />
								<Icon name="chevDown" size={18} color="#a6a6a6" />
							</ModeBtn>
						</ToolBar>
						<Frame>
							<RulerCorner />
							<TopRuler />
							<LeftRuler />
							<Canvas>
								<GuideSvg viewBox="0 0 1589 750" preserveAspectRatio="none">
									<rect x="253" y="100" width="963" height="543" fill="none" stroke="#5c5c88" strokeWidth="1.500" />
									<path d="M0 100H253" stroke="#a84f5a" strokeWidth="2" />
									<path d="M253 100H1216" stroke="#8d5294" strokeWidth="2" />
									<path d="M1216 100H1589" stroke="#a84f5a" strokeWidth="2" />
									<path d="M253 0V100" stroke="#93ad4d" strokeWidth="2" />
									<path d="M253 100V750" stroke="#7c9176" strokeWidth="2" />
								</GuideSvg>
								<ZoomBar>
									<Icon name="center" />
									<Gap $w={35} />
									<Badge sign="-" />
									<ZoomValue>41.8 %</ZoomValue>
									<Badge sign="+" />
								</ZoomBar>
								<ScenePreview>
									<GameLabel><Condensed $k={0.68}>YOU DIED</Condensed></GameLabel>
									<GameButton $h={87}><Condensed $k={0.64}>AGAIN</Condensed></GameButton>
									<GameButton $h={86} $mt={1}><Condensed $k={0.655}>QUIT</Condensed></GameButton>
								</ScenePreview>
								<Handle viewBox="0 0 34 34">
									<path d="M13 1h7v12h13v7H20v13h-7V20H1v-7h12z" fill="#cfcfcf" opacity=".9" />
									<path d="M15 3h3v12h13v3H18v13h-3V18H3v-3h12z" fill="#f56b6b" />
									<rect x="14.500" y="14.500" width="4" height="4" fill="#333" />
								</Handle>
								<VScroll><VThumb /></VScroll>
								<HScroll><HThumb /></HScroll>
							</Canvas>
						</Frame>
					</Panel>
					<Bottom>
						<ThemeHead>
							<ThemeTitle>Theme:</ThemeTitle>
							<ThemeAct $mr={33}>Save</ThemeAct>
							<ThemeAct $mr={32}>Save As...</ThemeAct>
							<ThemeAct $mr={21}>Close</ThemeAct>
							<HeadSep />
							<ThemeAct $mr={1}>Manage Items...</ThemeAct>
						</ThemeHead>
						<ThemeBody>
							<PreviewCol>
								<PreviewTabs>
									<PreviewTab>Default Preview</PreviewTab>
									<DarkBtn $w={225}>
										<Icon name="plus" size={30} />
										Add Preview
									</DarkBtn>
								</PreviewTabs>
								<PreviewBody>
									<DropperRow>
										<Icon name="dropper" />
									</DropperRow>
									<PreviewWrap>
										<PreviewFrame>
											<PreviewInner>
												<LabelCol>
													<PreviewLabel>
														<Condensed $k={0.67} $origin="left">Label</Condensed>
													</PreviewLabel>
													<PreviewDark />
												</LabelCol>
												<EditBox>
													<Condensed $k={0.69} $origin="left">LineEdit</Condensed>
												</EditBox>
												<TabsCol>
													<PreviewTabRow>
														<PreviewTabBox>
															<Condensed $k={0.63}>Tab 1</Condensed>
														</PreviewTabBox>
														<TinyArrows>
															<TinyArrow $c="#6e6e6e"><Icon name="back" size={10} color="#2e2e2e" /></TinyArrow>
															<TinyArrow $c="#dcdcdc"><Icon name="forward" size={10} color="#2e2e2e" /></TinyArrow>
														</TinyArrows>
													</PreviewTabRow>
													<StripBody $c="#222" />
												</TabsCol>
											</PreviewInner>
										</PreviewFrame>
										<PreviewScroll />
									</PreviewWrap>
								</PreviewBody>
							</PreviewCol>
							<ItemsCol>
								<ItemsRow>
									<Gap $w={8} />
									<TypeLabel>Type:</TypeLabel>
									<Gap $w={17} />
									<DimSelect>
										None
										<Icon name="chevDown" size={24} color="#757575" />
									</DimSelect>
									<DarkBtn $w={56}>
										<Icon name="plus" size={30} />
									</DarkBtn>
								</ItemsRow>
								<ItemsRow $mt={8}>
									<Gap $w={12} />
									<ShowDefault>Show Default</ShowDefault>
									<Toggle><Knob /></Toggle>
									<DarkBtn $w={262}>Override All</DarkBtn>
								</ItemsRow>
								<IconStrip>
									<StripTab $on><LetterIcon kind="clr" /></StripTab>
									<StripTab><LetterIcon kind="dotC" /></StripTab>
									<StripTab><LetterIcon kind="bigT" /></StripTab>
									<StripTab><LetterIcon kind="smallT" /></StripTab>
									<StripTab><Icon name="picture" /></StripTab>
									<StripTab><Icon name="rainbow" /></StripTab>
									<StripTab><Icon name="tools" /></StripTab>
								</IconStrip>
								<StripBody />
							</ItemsCol>
						</ThemeBody>
					</Bottom>
				</Column>

				<Column $w={541}>
					<Panel>
						<TabBar>
							<Tab $active $w={169} $pad={22}>Inspector</Tab>
							<Tab $pad={23}>Node</Tab>
							<Tab $pad={23}>History</Tab>
							<TabEnd $pad={3}>
								<Icon name="kebab" color="#7f7f7f" />
							</TabEnd>
						</TabBar>
						<SideBar $top={12} $h={60} $left={24}>
							<Icon name="fileAdd" />
							<Gap $w={34} />
							<Icon name="folderOpen" />
							<Gap $w={36} />
							<Icon name="save" color="#808080" />
							<Gap $w={36} />
							<Icon name="kebab" />
							<Gap $w={147} />
							<Icon name="back" size={24} />
							<Gap $w={23} />
							<Icon name="forward" size={24} color="#7f7f7f" />
							<Gap $w={31} />
							<Icon name="history" />
						</SideBar>
						<SideBar $left={8}>
							<NodePicker>
								<NameBox $gap={19}>
									<Icon name="tag" color={GREEN} />
									Label
								</NameBox>
								<Icon name="chevDown" size={28} />
							</NodePicker>
							<Gap $w={19} />
							<DocIcon />
						</SideBar>
						<SideBar $top={8} $left={8}>
							<LineEdit $w={460}>
								Filter Properties
								<Icon name="search" size={26} color="#dcdcdc" />
							</LineEdit>
							<Gap $w={23} />
							<Icon name="tools" />
						</SideBar>
						<InspectorBox>
							<SectionHead>
								<Icon name="tag" color={GREEN} />
								Label
							</SectionHead>
							<TextHead>
								Text
								<Icon name="reset" />
							</TextHead>
							<TextEditor>
								<TextArea>YOU DIED</TextArea>
								<TextSide><Icon name="expand" /></TextSide>
							</TextEditor>
							<PropList>
								<PropRow>
									<PropName>Label Settings</PropName>
									<EmptyValue>&lt;empty&gt;</EmptyValue>
									<MiniSelect><Icon name="chevDown" size={22} color="#bdbdbd" /></MiniSelect>
								</PropRow>
								<PropRow>
									<PropName>
										Horizontal Al
										<Icon name="reset" />
									</PropName>
									<SelectBox>Center<Icon name="chevDown" size={28} color="#cfcfcf" /></SelectBox>
								</PropRow>
								<PropRow>
									<PropName>Vertical Alignme</PropName>
									<SelectBox>Top<Icon name="chevDown" size={28} color="#cfcfcf" /></SelectBox>
								</PropRow>
								<PropRow>
									<PropName>Autowrap Mode</PropName>
									<SelectBox>Off<Icon name="chevDown" size={28} color="#cfcfcf" /></SelectBox>
								</PropRow>
								<PropRow $fill>
									<PropName $fill>Justification Flag</PropName>
									<FlagList>
										<Flag $on><CheckBox $on><CheckMark /></CheckBox>Kashida Justi</Flag>
										<Flag $on><CheckBox $on><CheckMark /></CheckBox>Word Justific</Flag>
										<Flag><CheckBox />Justify Only</Flag>
										<Flag $on><CheckBox $on><CheckMark /></CheckBox>Skip Last Lin</Flag>
										<Flag><CheckBox />Skip Last Lin</Flag>
										<Flag $on><CheckBox $on><CheckMark /></CheckBox>Do Not Skip</Flag>
									</FlagList>
								</PropRow>
							</PropList>
							<InspectorThumb />
						</InspectorBox>
					</Panel>
				</Column>
			</Columns>

			<Mark $x={57} $y={344} $w={482} $h={191} />
			<Mark $x={2189} $y={425} $w={505} $h={244} />
			<Mark $x={2189} $y={736} $w={505} $h={80} />
		</Page>
	);
}
